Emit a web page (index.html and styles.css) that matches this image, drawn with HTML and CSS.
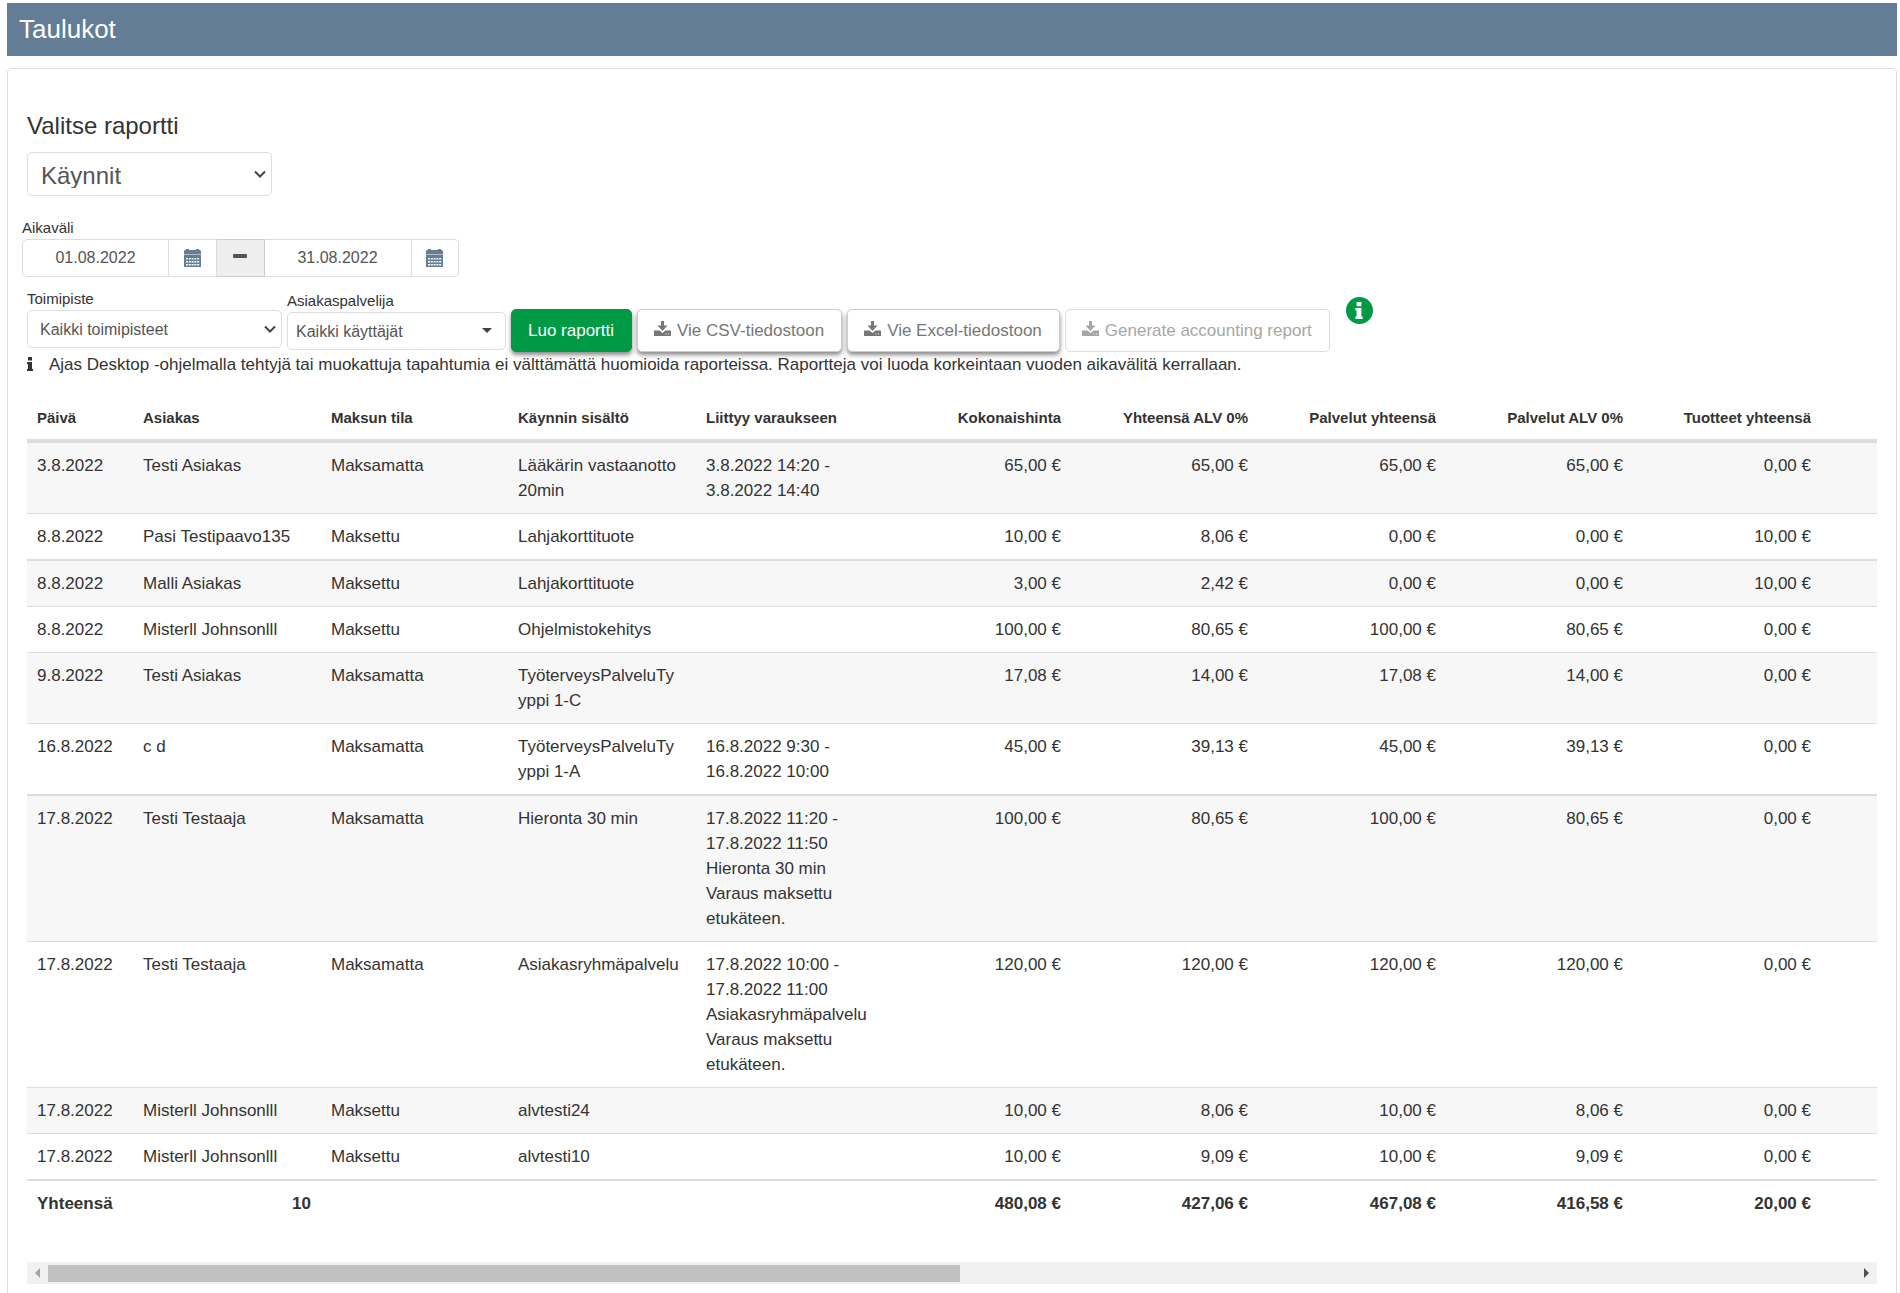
FILE: index.html
```html
<!DOCTYPE html>
<html lang="fi">
<head>
<meta charset="utf-8">
<title>Taulukot</title>
<link rel="stylesheet" href="styles.css">
</head>
<body>
<svg class="sprite" aria-hidden="true">
  <symbol id="i-calendar" viewBox="0 0 17 18">
    <path d="M1 1h1V0h3v1h7V0h3v1h1l1 1v3H0V2z"/>
    <path fill-rule="evenodd" d="M0 5.500h17V18H0zM2 9v1.400h2V9zm2.800 0v1.400h2V9zm2.800 0v1.400h2V9zm2.800 0v1.400h2V9zm2.800 0v1.400h2V9zM2 12v1.400h2V12zm2.800 0v1.400h2V12zm2.800 0v1.400h2V12zm2.800 0v1.400h2V12zm2.800 0v1.400h2V12zM2 15v1.400h2V15zm2.800 0v1.400h2V15zm2.800 0v1.400h2V15zm2.800 0v1.400h2V15zm2.800 0v1.400h2V15z"/>
  </symbol>
  <symbol id="i-download" viewBox="0 0 17 16">
    <path d="M7 0h3v4.500h3.500L8.500 10 3.500 4.500H7z"/>
    <path fill-rule="evenodd" d="M0 9.500h5.500l3 2.500 3-2.500H17V15H0zm11.500 3v1h1v-1zm2.500 0v1h1v-1z"/>
  </symbol>
  <symbol id="i-info" viewBox="0 0 6 14">
    <path d="M1 0h4v3.500H1zM0 5h5v7h1v2H0v-2h1V7H0z"/>
  </symbol>
  <symbol id="i-chevron" viewBox="0 0 12 8">
    <path d="M1 1.500l5 5 5-5" fill="none" stroke="currentColor" stroke-width="2"/>
  </symbol>
</svg>

<header class="title-bar"><h1>Taulukot</h1></header>

<main class="panel">
  <section class="report-pick">
    <label for="report">Valitse raportti</label>
    <div class="select-wrap select-report">
      <select id="report"><option>Käynnit</option></select>
      <svg class="chevron"><use href="#i-chevron"/></svg>
    </div>
  </section>

  <section class="range">
    <label for="from">Aikaväli</label>
    <div class="range-group">
      <input id="from" type="text" value="01.08.2022">
      <button type="button" class="cal" aria-label="Alkupäivä"><svg><use href="#i-calendar"/></svg></button>
      <span class="dash"></span>
      <input type="text" value="31.08.2022" aria-label="Loppupäivä">
      <button type="button" class="cal" aria-label="Loppupäivä"><svg><use href="#i-calendar"/></svg></button>
    </div>
  </section>

  <section class="filters">
    <div class="field field-office">
      <label for="office">Toimipiste</label>
      <div class="select-wrap">
        <select id="office"><option>Kaikki toimipisteet</option></select>
        <svg class="chevron"><use href="#i-chevron"/></svg>
      </div>
    </div>
    <div class="field field-staff">
      <label for="staff">Asiakaspalvelija</label>
      <div class="select-wrap">
        <select id="staff"><option>Kaikki käyttäjät</option></select>
        <span class="caret"></span>
      </div>
    </div>
    <button type="button" class="btn btn-primary">Luo raportti</button>
    <button type="button" class="btn"><svg><use href="#i-download"/></svg>Vie CSV-tiedostoon</button>
    <button type="button" class="btn"><svg><use href="#i-download"/></svg>Vie Excel-tiedostoon</button>
    <button type="button" class="btn" disabled><svg><use href="#i-download"/></svg>Generate accounting report</button>
    <a class="help" href="#" aria-label="Ohje"><svg><use href="#i-info"/></svg></a>
  </section>

  <p class="note"><svg><use href="#i-info"/></svg>Ajas Desktop -ohjelmalla tehtyjä tai muokattuja tapahtumia ei välttämättä huomioida raporteissa. Raportteja voi luoda korkeintaan vuoden aikavälitä kerrallaan.</p>

  <div class="table-scroll">
    <table>
      <colgroup>
        <col class="c-date"><col class="c-a"><col class="c-b"><col class="c-a"><col class="c-b"><col class="c-a"><col class="c-b"><col class="c-a"><col class="c-b"><col class="c-a"><col>
      </colgroup>
      <thead>
        <tr><th>Päivä</th><th>Asiakas</th><th>Maksun tila</th><th>Käynnin sisältö</th><th>Liittyy varaukseen</th><th class="num">Kokonaishinta</th><th class="num">Yhteensä ALV 0%</th><th class="num">Palvelut yhteensä</th><th class="num">Palvelut ALV 0%</th><th class="num">Tuotteet yhteensä</th><th></th></tr>
      </thead>
      <tbody>
        <tr><td>3.8.2022</td><td>Testi Asiakas</td><td>Maksamatta</td><td>Lääkärin vastaanotto 20min</td><td>3.8.2022 14:20 -<br>3.8.2022 14:40</td><td class="num">65,00 €</td><td class="num">65,00 €</td><td class="num">65,00 €</td><td class="num">65,00 €</td><td class="num">0,00 €</td><td></td></tr>
        <tr class="rule"><td>8.8.2022</td><td>Pasi Testipaavo135</td><td>Maksettu</td><td>Lahjakorttituote</td><td></td><td class="num">10,00 €</td><td class="num">8,06 €</td><td class="num">0,00 €</td><td class="num">0,00 €</td><td class="num">10,00 €</td><td></td></tr>
        <tr><td>8.8.2022</td><td>Malli Asiakas</td><td>Maksettu</td><td>Lahjakorttituote</td><td></td><td class="num">3,00 €</td><td class="num">2,42 €</td><td class="num">0,00 €</td><td class="num">0,00 €</td><td class="num">10,00 €</td><td></td></tr>
        <tr><td>8.8.2022</td><td>Misterll Johnsonlll</td><td>Maksettu</td><td>Ohjelmistokehitys</td><td></td><td class="num">100,00 €</td><td class="num">80,65 €</td><td class="num">100,00 €</td><td class="num">80,65 €</td><td class="num">0,00 €</td><td></td></tr>
        <tr><td>9.8.2022</td><td>Testi Asiakas</td><td>Maksamatta</td><td>TyöterveysPalveluTy<wbr>yppi 1-C</td><td></td><td class="num">17,08 €</td><td class="num">14,00 €</td><td class="num">17,08 €</td><td class="num">14,00 €</td><td class="num">0,00 €</td><td></td></tr>
        <tr class="rule"><td>16.8.2022</td><td>c d</td><td>Maksamatta</td><td>TyöterveysPalveluTy<wbr>yppi 1-A</td><td>16.8.2022 9:30 -<br>16.8.2022 10:00</td><td class="num">45,00 €</td><td class="num">39,13 €</td><td class="num">45,00 €</td><td class="num">39,13 €</td><td class="num">0,00 €</td><td></td></tr>
        <tr><td>17.8.2022</td><td>Testi Testaaja</td><td>Maksamatta</td><td>Hieronta 30 min</td><td>17.8.2022 11:20 -<br>17.8.2022 11:50<br>Hieronta 30 min<br>Varaus maksettu etukäteen.</td><td class="num">100,00 €</td><td class="num">80,65 €</td><td class="num">100,00 €</td><td class="num">80,65 €</td><td class="num">0,00 €</td><td></td></tr>
        <tr><td>17.8.2022</td><td>Testi Testaaja</td><td>Maksamatta</td><td>Asiakasryhmäpalvelu</td><td>17.8.2022 10:00 -<br>17.8.2022 11:00<br>Asiakasryhmäpalvelu<br>Varaus maksettu etukäteen.</td><td class="num">120,00 €</td><td class="num">120,00 €</td><td class="num">120,00 €</td><td class="num">120,00 €</td><td class="num">0,00 €</td><td></td></tr>
        <tr><td>17.8.2022</td><td>Misterll Johnsonlll</td><td>Maksettu</td><td>alvtesti24</td><td></td><td class="num">10,00 €</td><td class="num">8,06 €</td><td class="num">10,00 €</td><td class="num">8,06 €</td><td class="num">0,00 €</td><td></td></tr>
        <tr class="rule"><td>17.8.2022</td><td>Misterll Johnsonlll</td><td>Maksettu</td><td>alvtesti10</td><td></td><td class="num">10,00 €</td><td class="num">9,09 €</td><td class="num">10,00 €</td><td class="num">9,09 €</td><td class="num">0,00 €</td><td></td></tr>
      </tbody>
      <tfoot>
        <tr><td>Yhteensä</td><td class="num">10</td><td></td><td></td><td></td><td class="num">480,08 €</td><td class="num">427,06 €</td><td class="num">467,08 €</td><td class="num">416,58 €</td><td class="num">20,00 €</td><td></td></tr>
      </tfoot>
    </table>
  </div>
  <div class="hscroll" aria-hidden="true">
    <span class="arrow arrow-left"></span>
    <span class="track"><span class="thumb"></span></span>
    <span class="arrow arrow-right"></span>
  </div>
</main>
</body>
</html>
```
FILE: styles.css
```css
* { box-sizing: border-box; }

body {
  margin: 0;
  padding: 3px 3px 0 7px;
  min-height: 100vh;
  display: flex;
  flex-direction: column;
  background: #fff;
  color: #333;
  font-family: "Liberation Sans", Arial, sans-serif;
  font-size: 17px;
  line-height: 25px;
}

svg { display: block; fill: currentColor; }
.sprite { display: none; }

button, input, select { font: inherit; color: inherit; margin: 0; }

.title-bar {
  height: 53px;
  padding: 0 12px 2px;
  display: flex;
  align-items: center;
  background: #627d95;
  color: #fff;
}
.title-bar h1 { margin: 0; font-size: 26px; font-weight: 400; line-height: 32px; }

.panel {
  flex: 1;
  margin-top: 12px;
  padding: 42px 19px 0;
  border: 1px solid #ddd;
  border-bottom: 0;
  border-radius: 5px 5px 0 0;
}

.report-pick label { display: block; font-size: 24px; line-height: 30px; }

.select-wrap { position: relative; }
.select-wrap select {
  appearance: none;
  display: block;
  width: 100%;
  height: 38px;
  padding: 0 12px;
  border: 1px solid #ddd;
  border-radius: 5px;
  background: #fff;
  color: #555;
  font-size: 16px;
}
.chevron {
  position: absolute;
  right: 6px;
  top: 50%;
  width: 12px;
  height: 8px;
  margin-top: -4px;
  color: #444;
}
.caret {
  position: absolute;
  right: 14px;
  top: 50%;
  margin-top: -3px;
  border: 5px solid transparent;
  border-top-color: #444;
  border-bottom: 0;
}
.select-report { width: 245px; margin-top: 11px; }
.select-report select { height: 44px; padding: 2px 13px 0; font-size: 24px; }

.range { margin: 21px 0 0 -5px; }
.range label, .field label { display: block; margin-bottom: 1px; font-size: 15px; line-height: 21px; }
.range-group { display: flex; width: 437px; height: 38px; }
.range-group input {
  width: 147px;
  padding: 0 2px 2px;
  border: 1px solid #ddd;
  text-align: center;
  color: #555;
  font-size: 16px;
}
.range-group input:first-child { border-radius: 5px 0 0 5px; }
.cal {
  flex: 1;
  display: flex;
  align-items: center;
  justify-content: center;
  padding: 0;
  border: 1px solid #ddd;
  border-left: 0;
  background: #fff;
  color: #627d95;
}
.cal:last-child { border-radius: 0 5px 5px 0; }
.cal svg { width: 17px; height: 18px; }
.dash {
  width: 48px;
  display: flex;
  align-items: center;
  justify-content: center;
  border: 1px solid #ccc;
  border-left: 0;
  background: #eee;
}
.dash::before { content: ""; width: 14px; height: 4px; margin-bottom: 4px; border-radius: 1px; background: #555; }
.dash + input { border-left: 0; }

.filters { display: flex; gap: 5px; align-items: flex-start; margin-top: 11px; }
.field-office { width: 255px; }
.field-staff { width: 219px; padding-top: 2px; }
.field-staff select { padding: 0 8px; }

.btn {
  height: 43px;
  margin-top: 21px;
  padding: 0 17px 0 16px;
  display: flex;
  align-items: center;
  gap: 6px;
  border: 1px solid #ccc;
  border-radius: 5px;
  background: #fff;
  color: #777;
  white-space: nowrap;
  box-shadow: 0 3px 4px rgba(0, 0, 0, .45);
}
.btn svg { width: 17px; height: 16px; margin-bottom: 4px; }
.btn-primary { border-color: #094; background: #094; color: #fff; }
.btn:disabled { opacity: .65; box-shadow: none; }

.help {
  width: 27px;
  height: 27px;
  margin: 9px 0 0 11px;
  display: flex;
  align-items: center;
  justify-content: center;
  border-radius: 50%;
  background: #094;
  color: #fff;
}
.help svg { width: 10px; height: 17px; }

.note { margin: 0; display: flex; align-items: center; gap: 16px; }
.note svg { flex: none; width: 6px; height: 14px; margin-bottom: 2px; }

.table-scroll { margin-top: 16px; padding-bottom: 36px; overflow: hidden; }
table { width: 100%; table-layout: fixed; border-collapse: separate; border-spacing: 0; }
.c-date { width: 106px; }
.c-a { width: 188px; }
.c-b { width: 187px; }
th, td { padding: 10px; text-align: left; vertical-align: top; }
th { padding: 14px 10px 10px; font-size: 15px; line-height: 22px; border-bottom: 4px solid #ddd; white-space: nowrap; }
tbody td { border-bottom: 1px solid #ddd; }
tbody .rule td { border-bottom-width: 2px; }
tbody tr:nth-child(odd) { background: #f7f7f7; }
tfoot td { font-weight: 700; }
.num { text-align: right; }

.hscroll { display: flex; align-items: center; height: 22px; padding: 0 8px; gap: 8px; background: #f1f1f1; }
.track { flex: 1; height: 17px; }
.thumb { display: block; width: calc(50% + 8px); height: 17px; background: #c1c1c1; }
.arrow { border: 5px solid transparent; }
.arrow-left { border-left: 0; border-right-color: #a3a3a3; }
.arrow-right { border-right: 0; border-left-color: #505050; }
```
